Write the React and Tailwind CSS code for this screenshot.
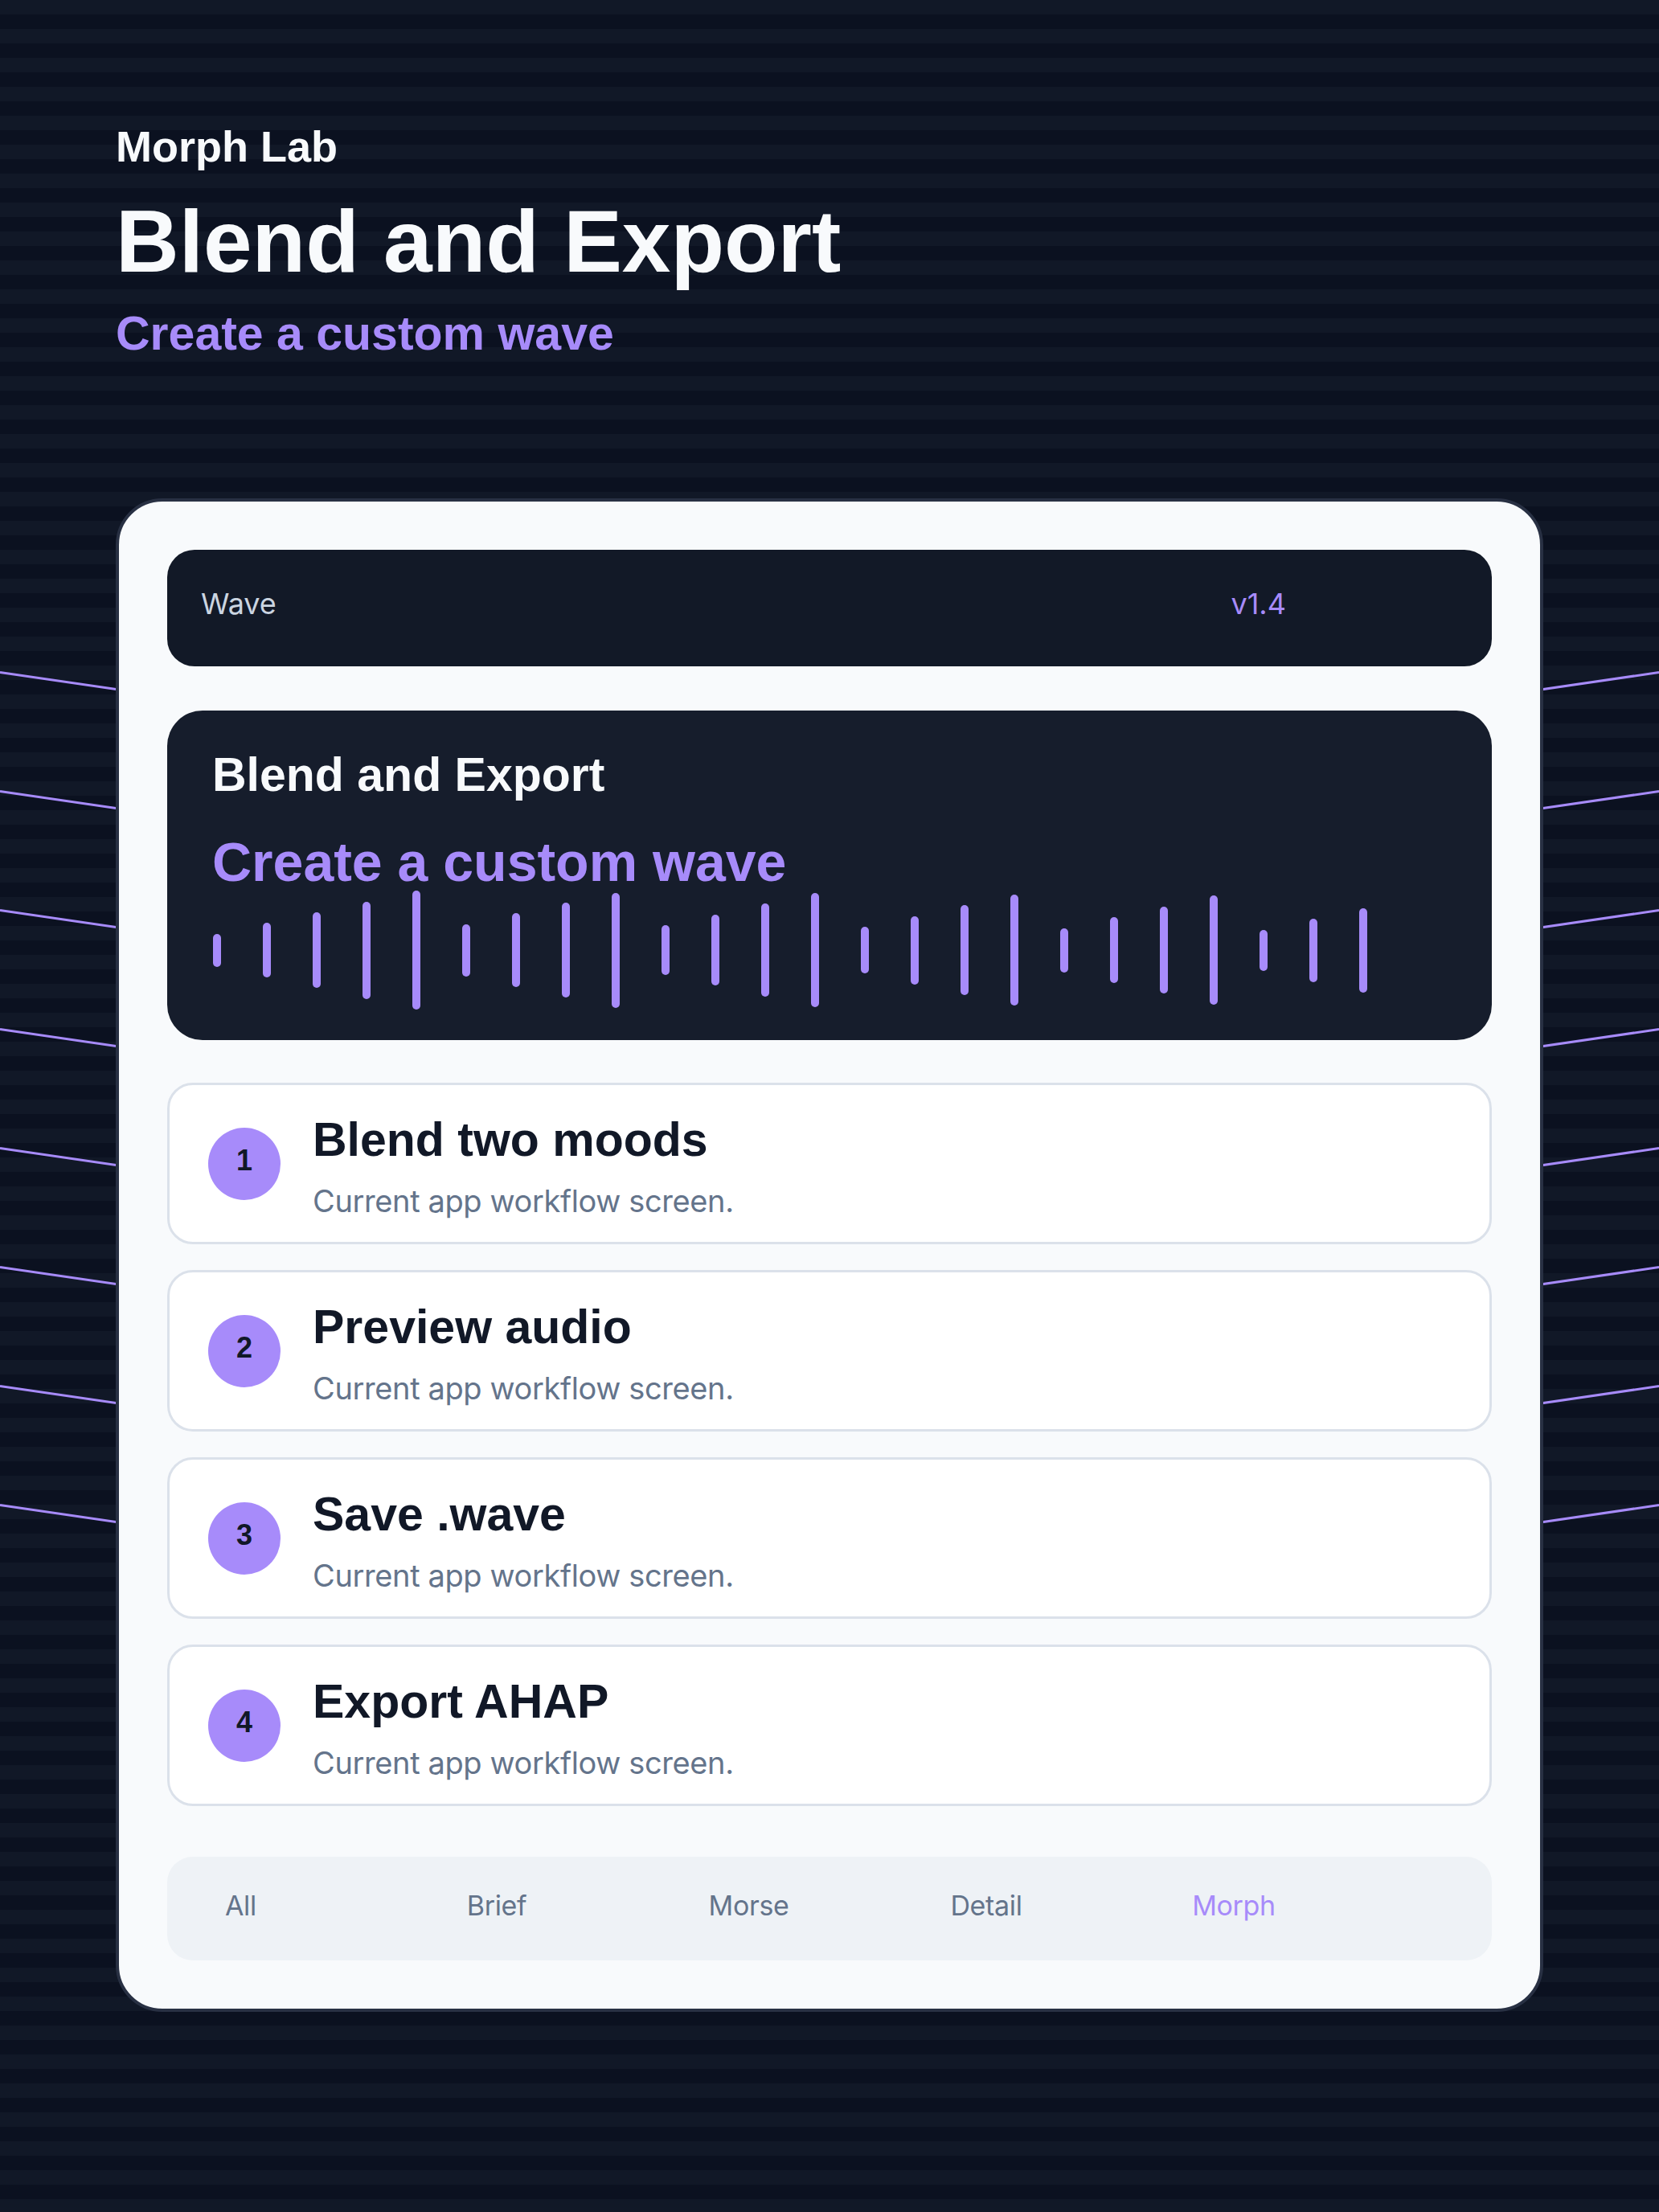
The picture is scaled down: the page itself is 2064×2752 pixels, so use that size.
import React from "react";

const sans = "font-['Liberation_Sans',Arial,sans-serif]";
const inter = "font-['Inter','Noto_Sans',sans-serif]";

const bars = [41, 68, 94, 121, 148, 65, 92, 118, 143, 62, 88, 116, 142, 58, 85, 112, 138, 55, 82, 108, 136, 51, 79, 105];

const steps = [
  { n: 1, title: "Blend two moods" },
  { n: 2, title: "Preview audio" },
  { n: 3, title: "Save .wave" },
  { n: 4, title: "Export AHAP" },
];

const tabs = ["All", "Brief", "Morse", "Detail", "Morph"];

function SideLines() {
  const rows = [0, 1, 2, 3, 4, 5, 6, 7];
  return (
    <svg
      className="absolute inset-0 pointer-events-none"
      width="2064"
      height="2752"
      viewBox="0 0 2064 2752"
    >
      {rows.map((i) => {
        const y = 836.5 + i * 148;
        return (
          <g key={i} stroke="#a78bfa" strokeWidth="3">
            <line x1="0" y1={y} x2="300" y2={y + 43.7} />
            <line x1="2064" y1={y} x2="1764" y2={y + 43.7} />
          </g>
        );
      })}
    </svg>
  );
}

function Waveform() {
  return (
    <div className="mt-[1px] ml-[1px] flex h-[150px] items-center gap-[52px]">
      {bars.map((h, i) => (
        <span
          key={i}
          className="block w-[10px] rounded-full bg-[#a78bfa]"
          style={{ height: h }}
        />
      ))}
    </div>
  );
}

function StepCard({ n, title }) {
  return (
    <div className="flex h-[201px] items-center gap-[40px] rounded-[32px] border-[3px] border-[#dbe1ea] bg-white pl-[48px]">
      <div
        className={`flex h-[90px] w-[90px] shrink-0 items-center justify-center rounded-full bg-[#a78bfa] pb-[7px] text-[36px] font-bold text-[#111827] ${sans}`}
      >
        {n}
      </div>
      <div className="flex flex-col pt-[8px]">
        <div className={`text-[59px] font-bold leading-[64px] text-[#111827] ${sans}`}>
          {title}
        </div>
        <div className={`mt-[21px] text-[38px] leading-[46px] tracking-[-0.01em] text-[#64748b] ${inter}`}>
          Current app workflow screen.
        </div>
      </div>
    </div>
  );
}

export default function App() {
  return (
    <div className="relative min-h-[2752px] w-[2064px] overflow-hidden bg-[repeating-linear-gradient(180deg,#111827_0px,#111827_18px,#0b1120_18px,#0b1120_36px)]">
      <SideLines />

      <div className="relative px-[144px] pt-[152px]">
        <header className={sans}>
          <div className="text-[54px] font-bold leading-[60px] text-[#f8fafc]">Morph Lab</div>
          <h1 className="mt-[28px] text-[109px] font-bold leading-[120px] text-[#f8fafc]">
            Blend and Export
          </h1>
          <div className="mt-[22px] text-[59px] font-bold leading-[66px] text-[#a78bfa]">
            Create a custom wave
          </div>
        </header>

        <main className="mt-[172px] rounded-[58px] border-[4px] border-[#283043] bg-[#f8fafc] p-[60px]">
          <div
            className={`flex h-[145px] items-start rounded-[34px] bg-[#121927] pl-[42px] pr-[256px] pt-[45px] text-[36px] leading-[44px] ${inter}`}
          >
            <span className="text-[#cbd5e1]">Wave</span>
            <span className="ml-auto text-[#a78bfa]">v1.4</span>
          </div>

          <section className="mt-[55px] rounded-[44px] bg-[#161d2c] px-[56px] pb-[37px] pt-[48px]">
            <div className={`text-[59px] font-bold leading-[64px] text-[#f8fafc] ${sans}`}>
              Blend and Export
            </div>
            <div className={`mt-[42px] text-[68px] font-bold leading-[68px] text-[#a78bfa] ${sans}`}>
              Create a custom wave
            </div>
            <Waveform />
          </section>

          <div className="mt-[53px] flex flex-col gap-[32px]">
            {steps.map((s) => (
              <StepCard key={s.n} {...s} />
            ))}
          </div>

          <nav
            className={`mt-[63px] grid h-[129px] grid-cols-5 rounded-[32px] bg-[#eef2f6] px-[72px] pt-[41px] text-[34px] leading-[40px] tracking-[-0.01em] ${inter}`}
          >
            {tabs.map((t) => (
              <span key={t} className={t === "Morph" ? "text-[#a78bfa]" : "text-[#64748b]"}>
                {t}
              </span>
            ))}
          </nav>
        </main>
      </div>
    </div>
  );
}
